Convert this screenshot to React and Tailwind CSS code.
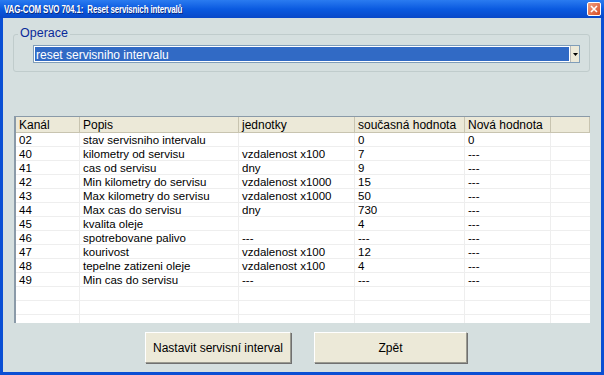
const rows = [
  ["02", "stav servisniho intervalu", "", "0", "0"],
  ["40", "kilometry od servisu", "vzdalenost x100", "7", "---"],
  ["41", "cas od servisu", "dny", "9", "---"],
  ["42", "Min kilometry do servisu", "vzdalenost x1000", "15", "---"],
  ["43", "Max kilometry do servisu", "vzdalenost x1000", "50", "---"],
  ["44", "Max cas do servisu", "dny", "730", "---"],
  ["45", "kvalita oleje", "", "4", "---"],
  ["46", "spotrebovane palivo", "---", "---", "---"],
  ["47", "kourivost", "vzdalenost x100", "12", "---"],
  ["48", "tepelne zatizeni oleje", "vzdalenost x100", "4", "---"],
  ["49", "Min cas do servisu", "---", "---", "---"],
  ["", "", "", "", ""],
  ["", "", "", "", ""],
  ["", "", "", "", ""],
];

const cols = ["w-[64px]", "w-[159px]", "w-[116px]", "w-[110px]", "w-[86px]", "flex-1"];
const headers = ["Kanál", "Popis", "jednotky", "současná hodnota", "Nová hodnota", ""];

function App() {
  return (
    <div className="w-[604px] h-[375px] bg-[#0a4fd4] flex flex-col font-['Liberation_Sans',Arial,sans-serif] overflow-hidden">
      {/* title bar */}
      <div className="h-[18px] flex items-center justify-between pl-[4px] pr-[3px] bg-gradient-to-b from-[#2a7bf0] via-[#0a5ae0] to-[#0848c8]">
        <span className="text-white text-[10px] font-bold tracking-[-0.2px] scale-x-[0.8] origin-left whitespace-nowrap [text-shadow:1px_1px_0_#0a2a80]">
          VAG-COM SVO 704.1:&nbsp; Reset servisnich intervalů
        </span>
        <div className="w-[14px] h-[14px] rounded-[2px] border border-white bg-gradient-to-br from-[#f0a080] to-[#d8481c] flex items-center justify-center">
          <svg width="8" height="8" viewBox="0 0 8 8">
            <path d="M1 1L7 7M7 1L1 7" stroke="white" strokeWidth="1.6" />
          </svg>
        </div>
      </div>

      {/* body */}
      <div className="flex-1 mx-[3px] mb-[3px] bg-[#d5dfdf] flex flex-col pt-[9px] px-[10px]">
        {/* group box */}
        <div className="relative mr-[1px] mt-[7px] h-[38px] border border-[#c0cccc] rounded-[3px]">
          <span className="absolute -top-[10px] left-[4px] px-[2px] bg-[#d5dfdf] text-[#0a2a9a] text-[12.5px] leading-[16px]">
            Operace
          </span>
          <div className="mt-[10px] ml-[19px] mr-[9px] h-[18px] flex border border-[#7f9db9] bg-white">
            <div className="flex-1 bg-[#316ac5] text-white text-[12px] leading-[16px] pl-[1px] border border-white">
              reset servisniho intervalu
            </div>
            <div className="w-[9px] bg-[#ece9d8] border-l border-[#b8b8b8] flex items-center justify-center">
              <svg width="5" height="3" viewBox="0 0 5 3">
                <path d="M0 0H5L2.5 3Z" fill="#000" />
              </svg>
            </div>
          </div>
        </div>

        {/* table */}
        <div className="mt-[44px] mx-[1px] h-[207px] bg-white border-l-2 border-t border-[#8a9aa8] flex flex-col overflow-hidden">
          <div className="flex h-[16px] bg-[#ece9d8] border-b border-[#c8c4b0] text-[12px] leading-[16px] text-black">
            {headers.map((h, i) => (
              <div key={i} className={`${cols[i]} pl-[3px] border-r border-[#c8c4b0] whitespace-nowrap`}>
                {h}
              </div>
            ))}
          </div>
          {rows.map((r, ri) => (
            <div key={ri} className="flex h-[14px] border-b border-[#eeeeee] text-[11.5px] leading-[14px] text-black shrink-0">
              {r.map((c, ci) => (
                <div key={ci} className={`${cols[ci]} pl-[3px] border-r border-[#eeeeee] whitespace-nowrap`}>
                  {c}
                </div>
              ))}
            </div>
          ))}
        </div>

        {/* buttons */}
        <div className="flex justify-center gap-[23px] mt-[9px] pl-[8px]">
          <button className="w-[146px] h-[31px] bg-[#ece9d8] border border-white border-r-[#9a9a90] border-b-[#9a9a90] shadow-[1px_1px_0_#707070] text-[12px] text-black">
            Nastavit servisní interval
          </button>
          <button className="w-[153px] h-[31px] bg-[#ece9d8] border border-white border-r-[#9a9a90] border-b-[#9a9a90] shadow-[1px_1px_0_#707070] text-[12px] text-black">
            Zpět
          </button>
        </div>
      </div>
    </div>
  );
}

export default App;
